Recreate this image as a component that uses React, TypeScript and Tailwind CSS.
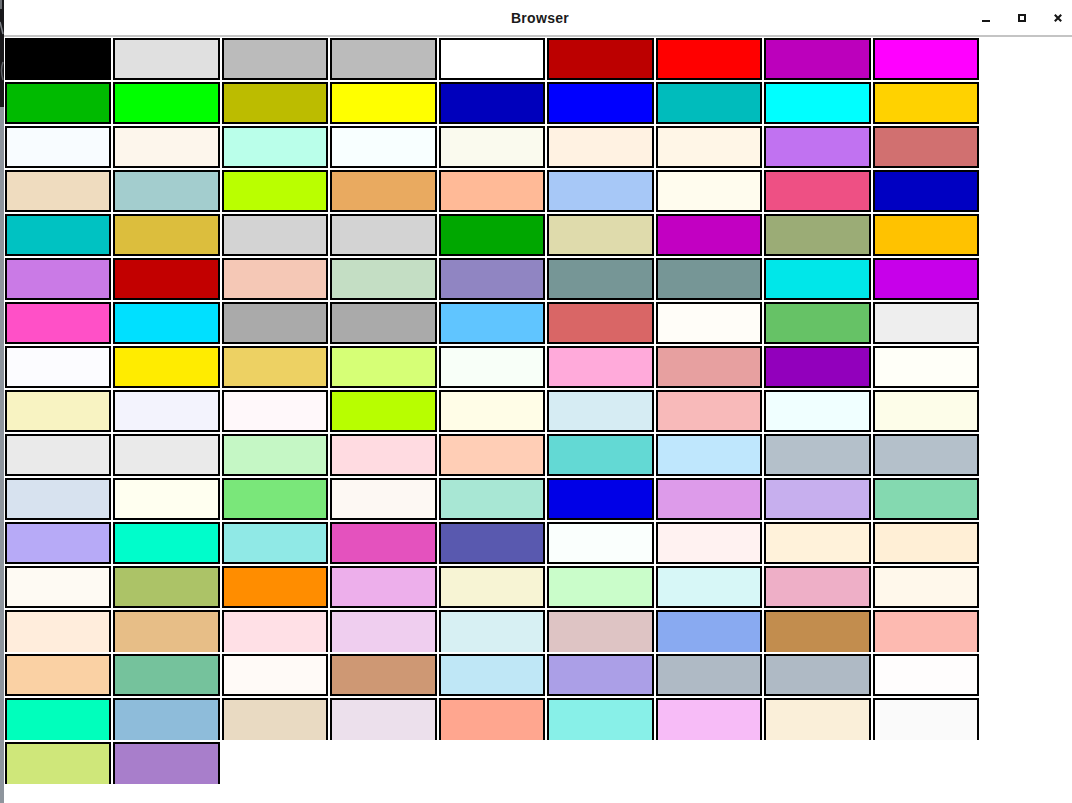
import React from 'react';

// named colours, shown gamma-lifted the way the reference window renders them
const SWATCH_ROWS: string[][] = [
  ['bg-[#000000]', 'bg-[#E0E0E0]', 'bg-[#BBBBBB]', 'bg-[#BBBBBB]', 'bg-[#FFFFFF]', 'bg-[#BC0000]', 'bg-[#FF0000]', 'bg-[#BC00BC]', 'bg-[#FF00FF]'],
  ['bg-[#00BA00]', 'bg-[#00FF00]', 'bg-[#BCBC00]', 'bg-[#FFFF00]', 'bg-[#0000BC]', 'bg-[#0000FF]', 'bg-[#00BCBC]', 'bg-[#00FFFF]', 'bg-[#FFD200]'],
  ['bg-[#F8FCFF]', 'bg-[#FDF6EC]', 'bg-[#BAFFEA]', 'bg-[#F8FFFF]', 'bg-[#FAFAEE]', 'bg-[#FFF2E2]', 'bg-[#FFF6E7]', 'bg-[#C172F1]', 'bg-[#D17070]'],
  ['bg-[#EFDCBF]', 'bg-[#A3CDCE]', 'bg-[#BAFF00]', 'bg-[#E9AA60]', 'bg-[#FFBA97]', 'bg-[#A7C8F7]', 'bg-[#FFFCEE]', 'bg-[#EE5084]', 'bg-[#0000C2]'],
  ['bg-[#00C2C2]', 'bg-[#DCBE3D]', 'bg-[#D3D3D3]', 'bg-[#D3D3D3]', 'bg-[#00A700]', 'bg-[#DFDBAC]', 'bg-[#C200C2]', 'bg-[#9BAC76]', 'bg-[#FFC200]'],
  ['bg-[#CA7AE6]', 'bg-[#C20000]', 'bg-[#F5C8B6]', 'bg-[#C4DEC4]', 'bg-[#9085C2]', 'bg-[#769696]', 'bg-[#769696]', 'bg-[#00E7E9]', 'bg-[#C700EA]'],
  ['bg-[#FF50C7]', 'bg-[#00E0FF]', 'bg-[#AAAAAA]', 'bg-[#AAAAAA]', 'bg-[#60C5FF]', 'bg-[#D96666]', 'bg-[#FFFDF8]', 'bg-[#66C266]', 'bg-[#EEEEEE]'],
  ['bg-[#FCFCFF]', 'bg-[#FFEC00]', 'bg-[#EDD163]', 'bg-[#D6FF76]', 'bg-[#F8FFF8]', 'bg-[#FFAADA]', 'bg-[#E7A0A0]', 'bg-[#9200BC]', 'bg-[#FFFFF8]'],
  ['bg-[#F8F3C2]', 'bg-[#F3F3FD]', 'bg-[#FFF8FA]', 'bg-[#B8FE00]', 'bg-[#FFFDE7]', 'bg-[#D6ECF3]', 'bg-[#F8BABA]', 'bg-[#F0FFFF]', 'bg-[#FDFDE9]'],
  ['bg-[#EAEAEA]', 'bg-[#EAEAEA]', 'bg-[#C5F7C5]', 'bg-[#FFDBE1]', 'bg-[#FFCEB6]', 'bg-[#63D9D4]', 'bg-[#BFE7FD]', 'bg-[#B4C0CA]', 'bg-[#B4C0CA]'],
  ['bg-[#D7E2EF]', 'bg-[#FFFFF0]', 'bg-[#7AE77A]', 'bg-[#FDF8F3]', 'bg-[#A8E7D4]', 'bg-[#0000E7]', 'bg-[#DD9BEA]', 'bg-[#C7AFEE]', 'bg-[#84D9B0]'],
  ['bg-[#B7AAF7]', 'bg-[#00FDCB]', 'bg-[#90E9E6]', 'bg-[#E452BE]', 'bg-[#5959AF]', 'bg-[#FAFFFD]', 'bg-[#FFF2F1]', 'bg-[#FFF2DA]', 'bg-[#FFEFD6]'],
  ['bg-[#FEFAF3]', 'bg-[#ACC367]', 'bg-[#FF8D00]', 'bg-[#EDAFEB]', 'bg-[#F7F4D4]', 'bg-[#CAFDCA]', 'bg-[#D7F7F7]', 'bg-[#EEAFC7]', 'bg-[#FFF8EB]'],
  ['bg-[#FFEDDC]', 'bg-[#E7BE87]', 'bg-[#FFE0E6]', 'bg-[#EFCEEF]', 'bg-[#D7F0F3]', 'bg-[#DEC4C4]', 'bg-[#89AAF1]', 'bg-[#C28D4E]', 'bg-[#FDBAB1]'],
  ['bg-[#FAD1A4]', 'bg-[#75C29C]', 'bg-[#FFFAF7]', 'bg-[#CE9874]', 'bg-[#BFE7F6]', 'bg-[#AB9FE7]', 'bg-[#AFBAC5]', 'bg-[#AFBAC5]', 'bg-[#FFFDFD]'],
  ['bg-[#00FFBC]', 'bg-[#8EBCDA]', 'bg-[#E9DAC2]', 'bg-[#ECE0EC]', 'bg-[#FFA68F]', 'bg-[#88F0E8]', 'bg-[#F7BCF7]', 'bg-[#FAEFD9]', 'bg-[#FAFAFA]'],
  ['bg-[#CFE77A]', 'bg-[#A87ECB]'],
];

// rows whose bottom edge is clipped in the capture
const CLIPPED_ROWS = new Set([13, 15, 16]);

function WindowEdge() {
  return (
    <div className="flex w-[4px] shrink-0 flex-col">
      <svg width="4" height="107" className="block bg-[#18181a]">
        <rect x="0" y="0" width="2" height="9" fill="#6b6e73" />
        <path d="M0 22 L3 34" stroke="#7d8086" strokeWidth="1.5" />
        <path d="M3 62 Q0 70 3 80" stroke="#5d6065" strokeWidth="1.5" fill="none" />
      </svg>
      <div className="flex-1 bg-[#8e959d]" />
    </div>
  );
}

function TitleButtons() {
  return (
    <div className="flex items-center justify-end gap-[28px] pr-[10px] text-[#161616]">
      <svg width="8" height="8" viewBox="0 0 8 8" className="block">
        <rect x="0" y="6" width="8" height="2" fill="currentColor" />
      </svg>
      <svg width="8" height="8" viewBox="0 0 8 8" className="block">
        <rect x="1" y="1" width="6" height="6" fill="none" stroke="currentColor" strokeWidth="2" />
      </svg>
      <svg width="8" height="8" viewBox="0 0 8 8" className="block">
        <path d="M0.8 0.8 L7.2 7.2 M7.2 0.8 L0.8 7.2" stroke="currentColor" strokeWidth="2.1" />
      </svg>
    </div>
  );
}

function TitleBar() {
  return (
    <div className="grid h-[37px] shrink-0 grid-cols-[1fr_auto_1fr] items-center border-b-2 border-[#c4c4c4] bg-white">
      <div />
      <span className="mt-[1px] pl-[4px] text-[14px] leading-none font-bold tracking-[0.3px] text-[#1a1a1a]">Browser</span>
      <TitleButtons />
    </div>
  );
}

export default function App() {
  return (
    <div className="flex h-[803px] w-[1072px] overflow-hidden bg-white font-['Liberation_Sans',Arial,sans-serif]">
      <WindowEdge />
      <div className="flex min-w-0 flex-1 flex-col bg-white">
        <TitleBar />
        <div className="pl-[1px] pt-[1px]">
          <div className="grid w-[974px] grid-cols-9 gap-[2px]">
            {SWATCH_ROWS.map((row, r) =>
              row.map((bg, c) => (
                <div
                  key={`${r}-${c}`}
                  className={`h-[42px] border-2 border-black ${CLIPPED_ROWS.has(r) ? 'border-b-0' : ''} ${bg}`}
                />
              ))
            )}
          </div>
        </div>
      </div>
    </div>
  );
}
